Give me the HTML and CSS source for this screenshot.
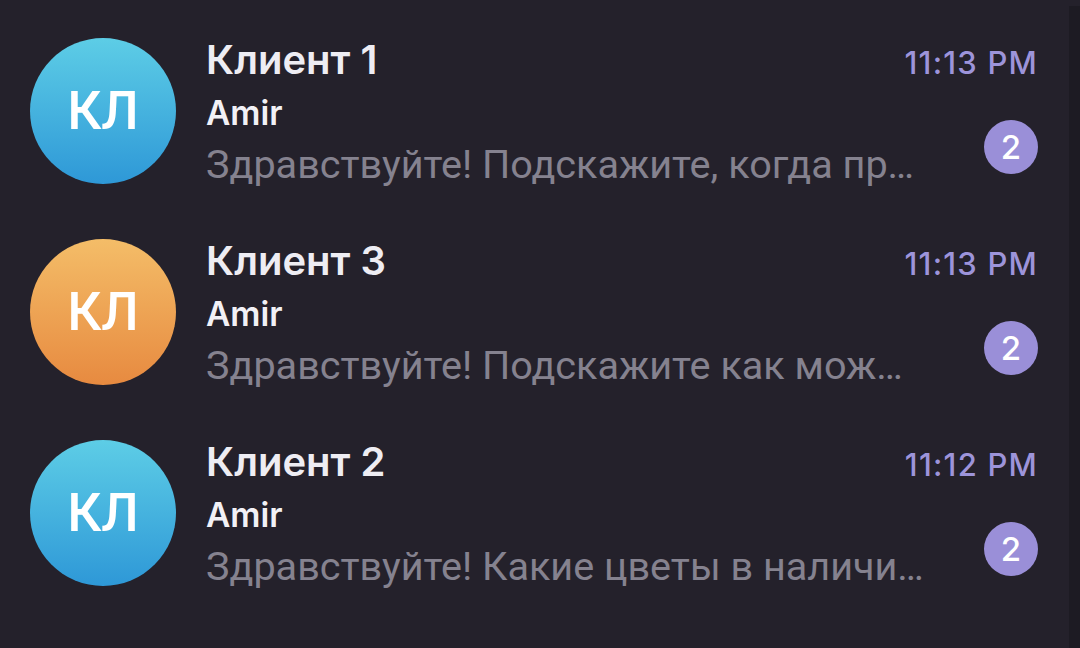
FILE: index.html
```html
<!DOCTYPE html>
<html lang="ru">
<head>
<meta charset="utf-8">
<title>Chats</title>
<link rel="stylesheet" href="styles.css">
</head>
<body>
<div class="screen">
  <ul class="chat-list">
    <li class="chat">
      <div class="avatar avatar-blue">КЛ</div>
      <div class="chat-body">
        <div class="line line-top">
          <span class="title">Клиент 1</span>
          <span class="time">11:13 PM</span>
        </div>
        <div class="line"><span class="sender">Amir</span></div>
        <div class="line line-msg">
          <span class="message">Здравствуйте! Подскажите, когда пр…</span>
          <span class="badge">2</span>
        </div>
      </div>
    </li>
    <li class="chat">
      <div class="avatar avatar-orange">КЛ</div>
      <div class="chat-body">
        <div class="line line-top">
          <span class="title">Клиент 3</span>
          <span class="time">11:13 PM</span>
        </div>
        <div class="line"><span class="sender">Amir</span></div>
        <div class="line line-msg">
          <span class="message">Здравствуйте! Подскажите как мож…</span>
          <span class="badge">2</span>
        </div>
      </div>
    </li>
    <li class="chat">
      <div class="avatar avatar-blue">КЛ</div>
      <div class="chat-body">
        <div class="line line-top">
          <span class="title">Клиент 2</span>
          <span class="time">11:12 PM</span>
        </div>
        <div class="line"><span class="sender">Amir</span></div>
        <div class="line line-msg">
          <span class="message">Здравствуйте! Какие цветы в наличи…</span>
          <span class="badge">2</span>
        </div>
      </div>
    </li>
  </ul>
  <div class="scroll-track"></div>
</div>
</body>
</html>
```

FILE: styles.css
```css
* { box-sizing: border-box; }
html, body {
  margin: 0;
  padding: 0;
  background: #24212b;
  width: 1080px;
  height: 648px;
  overflow: hidden;
}
.screen {
  display: flex;
  width: 1080px;
  height: 648px;
}
.chat-list {
  list-style: none;
  margin: 0;
  padding: 10px 31px 0 30px;
  flex: 1;
  display: flex;
  flex-direction: column;
}
.chat {
  display: flex;
  align-items: center;
  gap: 30px;
  height: 201px;
}
.avatar {
  width: 146px;
  height: 146px;
  border-radius: 50%;
  flex: none;
  display: flex;
  align-items: center;
  justify-content: center;
  color: #ffffff;
  font-family: Roboto, "Noto Sans", sans-serif;
  font-weight: 500;
  font-size: 53px;
}
.avatar-blue { background: linear-gradient(180deg, #5dcde6 0%, #2e98d7 100%); }
.avatar-orange { background: linear-gradient(180deg, #f4bd68 0%, #e78a40 100%); }
.chat-body {
  flex: 1;
  display: flex;
  flex-direction: column;
  min-width: 0;
}
.line {
  display: flex;
  align-items: center;
  justify-content: space-between;
  height: 51px;
  position: relative;
}
.line-top { align-items: baseline; }
.title {
  font-family: Inter, Roboto, sans-serif;
  font-weight: 600;
  font-size: 40px;
  line-height: 51px;
  color: #eeedf3;
}
.time {
  font-family: Inter, Roboto, sans-serif;
  font-weight: 500;
  font-size: 31px;
  letter-spacing: 1.2px;
  color: #9d94da;
}
.sender {
  font-family: Inter, Roboto, sans-serif;
  font-weight: 600;
  font-size: 33.5px;
  color: #f2f1f6;
  padding-top: 4px;
}
.message {
  font-family: Roboto, "Noto Sans", sans-serif;
  font-weight: 400;
  font-size: 39.6px;
  color: #85828f;
  white-space: nowrap;
  padding-top: 5px;
}
.badge {
  position: absolute;
  right: 0;
  top: -16px;
  width: 54px;
  height: 54px;
  border-radius: 50%;
  background: #9a8fd8;
  color: #ffffff;
  font-family: Inter, Roboto, sans-serif;
  font-weight: 500;
  font-size: 33px;
  display: flex;
  align-items: center;
  justify-content: center;
}
.scroll-track {
  width: 11px;
  margin-top: 6px;
  background: #1d1b23;
  flex: none;
}
```
